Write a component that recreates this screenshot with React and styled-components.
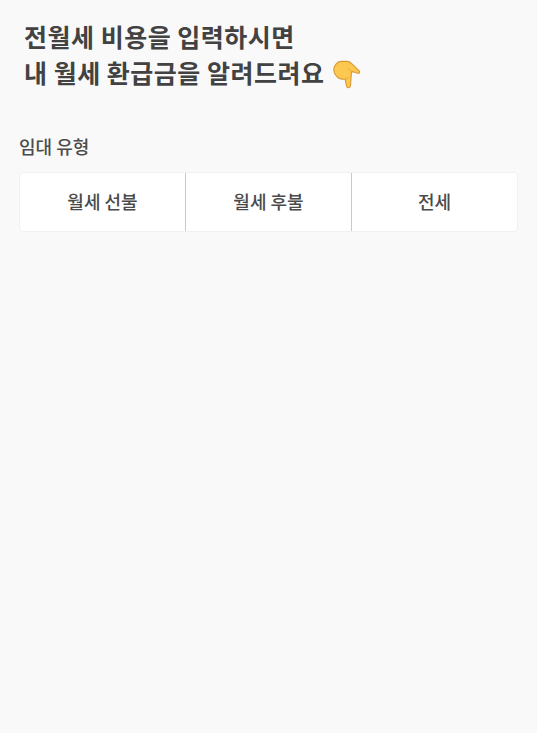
import styled, { createGlobalStyle } from "styled-components";

const GlobalStyle = createGlobalStyle`
  html, body {
    margin: 0;
    padding: 0;
    background: #f9f9f9;
  }
  * {
    box-sizing: border-box;
  }
`;

const Page = styled.div`
  width: 537px;
  min-height: 733px;
  padding: 18px 19px 0 19px;
  background: #f9f9f9;
  font-family: "Noto Sans CJK KR", "Noto Sans", sans-serif;
`;

const Title = styled.h1`
  margin: 0 0 43px 5px;
  font-size: 25px;
  font-weight: 700;
  line-height: 36px;
  color: #424242;
  letter-spacing: 0.5px;
`;

const Hand = styled.svg`
  width: 30px;
  height: 30px;
  margin-left: 7px;
  vertical-align: -7px;
`;

const Label = styled.div`
  margin-bottom: 13px;
  font-size: 18px;
  font-weight: 500;
  line-height: 26px;
  color: #4c4c4c;
`;

const Segments = styled.div`
  display: grid;
  grid-template-columns: 166px 166px 1fr;
  height: 60px;
  background: #fff;
  border: 1px solid #f1f1f1;
  border-radius: 4px;
`;

const Segment = styled.button`
  padding: 0 0 2px;
  border: 0;
  border-right: ${(p) => (p.$last ? "0" : "1px solid #c9c9c9")};
  background: transparent;
  font-family: inherit;
  font-size: 18px;
  font-weight: 500;
  color: #4a4a4a;
`;

const HandIcon = () => (
  <Hand viewBox="0 0 32 32" aria-hidden="true">
    <path
      d="M2 9.5C2.5 5 6 1.5 10 1.5h6c2 0 3.5.8 5 2.3l8 7.7c1.3 1.4.2 3-1.5 2.7l-6-1.9-.8 1.2-1 14c-.2 2.6-3.7 2.8-4.2.2L14 20.5c-3.5.2-6.5-.5-8.5-2.6C3 15.5 1.6 12.5 2 9.5z"
      fill="#fcc84f"
      stroke="#d99a35"
      strokeWidth="1.2"
      strokeLinejoin="round"
    />
    <path d="M14 20.5c1.6-.1 3-1 3.6-2.4" fill="none" stroke="#e0a63e" strokeWidth="1" strokeLinecap="round" />
    <path d="M21.5 12.8l-4-3.2" fill="none" stroke="#e0a63e" strokeWidth="1" strokeLinecap="round" />
  </Hand>
);

const App = () => {
  return (
    <Page>
      <GlobalStyle />
      <Title>
        전월세 비용을 입력하시면
        <br />
        내 월세 환급금을 알려드려요
        <HandIcon />
      </Title>
      <Label>임대 유형</Label>
      <Segments>
        <Segment>월세 선불</Segment>
        <Segment>월세 후불</Segment>
        <Segment $last>전세</Segment>
      </Segments>
    </Page>
  );
};

export default App;
